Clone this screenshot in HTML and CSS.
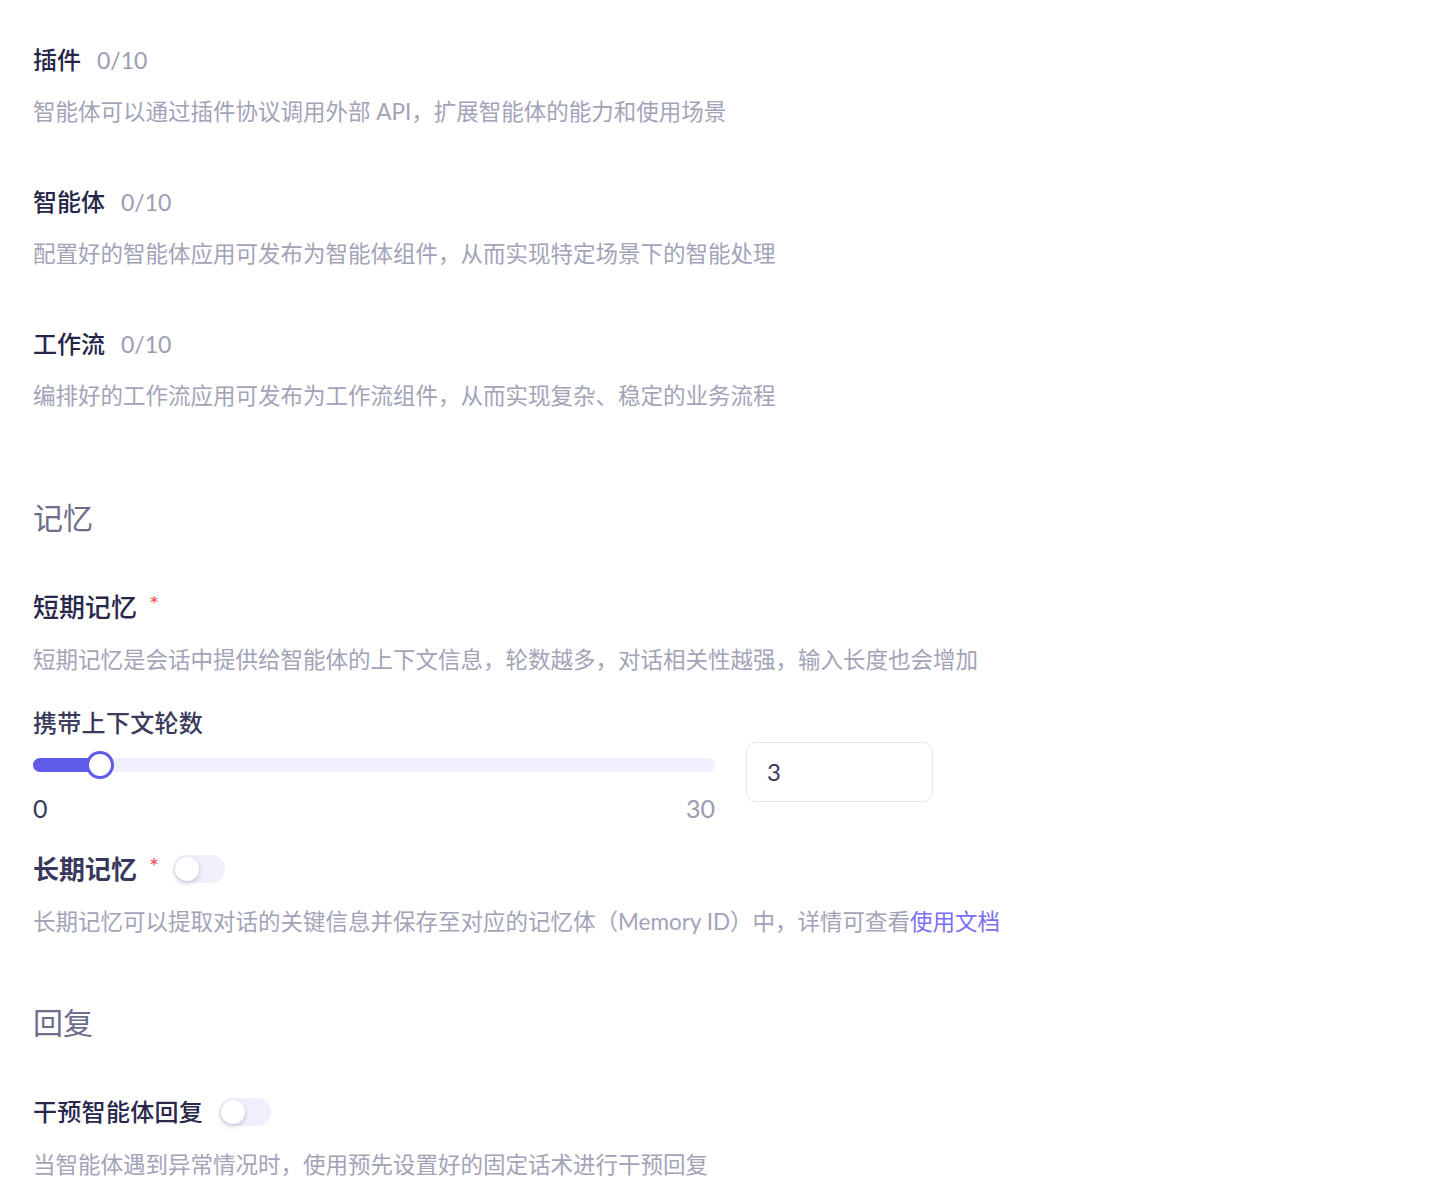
FILE: index.html
```html
<!DOCTYPE html>
<html lang="zh-CN">
<head>
<meta charset="utf-8">
<title>设置</title>
<link rel="stylesheet" href="styles.css">
</head>
<body>
<div class="page">
  <div class="item">
    <div class="item-title">插件<span class="count">0/10</span></div>
    <div class="desc">智能体可以通过插件协议调用外部 API，扩展智能体的能力和使用场景</div>
  </div>
  <div class="item">
    <div class="item-title">智能体<span class="count">0/10</span></div>
    <div class="desc">配置好的智能体应用可发布为智能体组件，从而实现特定场景下的智能处理</div>
  </div>
  <div class="item">
    <div class="item-title">工作流<span class="count">0/10</span></div>
    <div class="desc">编排好的工作流应用可发布为工作流组件，从而实现复杂、稳定的业务流程</div>
  </div>

  <h2 class="section section-memory">记忆</h2>

  <div class="item-title big">短期记忆<span class="req">*</span></div>
  <div class="desc desc-lower">短期记忆是会话中提供给智能体的上下文信息，轮数越多，对话相关性越强，输入长度也会增加</div>

  <div class="label">携带上下文轮数</div>
  <div class="slider-row">
    <div class="slider">
      <div class="track">
        <div class="fill" style="width: 68px"></div>
        <div class="thumb" style="left: 67px"></div>
      </div>
      <div class="marks"><span class="min">0</span><span class="max">30</span></div>
    </div>
    <div class="num-input">3</div>
  </div>

  <div class="item-title big long">长期记忆<span class="req">*</span><span class="toggle"><span class="knob"></span></span></div>
  <div class="desc desc-lower">长期记忆可以提取对话的关键信息并保存至对应的记忆体（Memory ID）中，详情可查看<a class="link" href="#">使用文档</a></div>

  <h2 class="section section-reply">回复</h2>

  <div class="item-title reply">干预智能体回复<span class="toggle wide-gap"><span class="knob"></span></span></div>
  <div class="desc desc-lower">当智能体遇到异常情况时，使用预先设置好的固定话术进行干预回复</div>
</div>
</body>
</html>
```

FILE: styles.css
```css
* { box-sizing: border-box; }
html, body { margin: 0; padding: 0; background: #ffffff; }
body {
  font-family: "Lato", "Noto Sans CJK SC", sans-serif;
  color: #23233f;
}
.page {
  padding: 44px 0 0 33px;
}
.item { margin-bottom: 58px; }
.item-title {
  display: flex;
  align-items: center;
  font-size: 24px;
  font-weight: 500;
  line-height: 32px;
  height: 32px;
  color: #25254a;
}
.item-title.big { font-size: 26px; margin-top: 54px; color: #28284c; }
.item-title.long { margin-top: 29px; color: #38385c; font-weight: 700; }
.item-title.reply { margin-top: 54px; color: #28284c; letter-spacing: 0.3px; }
.count {
  font-weight: 400;
  font-size: 23px;
  color: #9c9cb2;
  margin-left: 16px;
  letter-spacing: 0;
}
.desc {
  margin-top: 20px;
  font-size: 22.5px;
  line-height: 32px;
  color: #a3a3b8;
  white-space: nowrap;
}
.desc-lower { margin-top: 21px; }
.link { color: #7b6ef6; text-decoration: none; }
.section {
  margin: 0;
  font-size: 30px;
  font-weight: 400;
  line-height: 40px;
  color: #6e6e8c;
}
.section-memory { margin-top: 85px; }
.section-reply { margin-top: 64px; }
.req {
  color: #f5535a;
  font-size: 24px;
  font-weight: 400;
  margin-left: 12px;
  align-self: flex-start;
  line-height: 26px;
}
.label {
  margin-top: 31px;
  font-size: 24px;
  font-weight: 500;
  line-height: 32px;
  color: #3a3a5c;
  letter-spacing: 0.3px;
}
.slider-row {
  display: flex;
  align-items: flex-start;
  margin-top: 3px;
}
.slider { width: 682px; }
.track {
  position: relative;
  margin-top: 16px;
  height: 14px;
  border-radius: 7px;
  background: #f0effd;
}
.fill {
  height: 14px;
  border-radius: 7px;
  background: #5f5ce9;
}
.thumb {
  position: absolute;
  top: -7px;
  width: 28px;
  height: 28px;
  margin-left: -14px;
  border-radius: 50%;
  border: 3.5px solid #5f5ce9;
  background: #ffffff;
}
.marks {
  display: flex;
  justify-content: space-between;
  margin-top: 20px;
  font-size: 25px;
  line-height: 32px;
}
.min { color: #3a3a5c; }
.max { color: #9c9cb2; }
.num-input {
  margin-left: 31px;
  width: 187px;
  height: 60px;
  border: 1px solid #e6e6ef;
  border-radius: 10px;
  padding-left: 20px;
  font-size: 24px;
  line-height: 58px;
  color: #3a3a5c;
}
.toggle {
  position: relative;
  display: inline-block;
  width: 52px;
  height: 28px;
  border-radius: 14px;
  background: #f0effb;
  margin-left: 14px;
}
.toggle.wide-gap { margin-left: 16px; }
.knob {
  position: absolute;
  left: 2px;
  top: 2px;
  width: 24px;
  height: 24px;
  border-radius: 50%;
  background: #ffffff;
  box-shadow: 0 2px 5px rgba(60, 60, 110, 0.25);
}
```
